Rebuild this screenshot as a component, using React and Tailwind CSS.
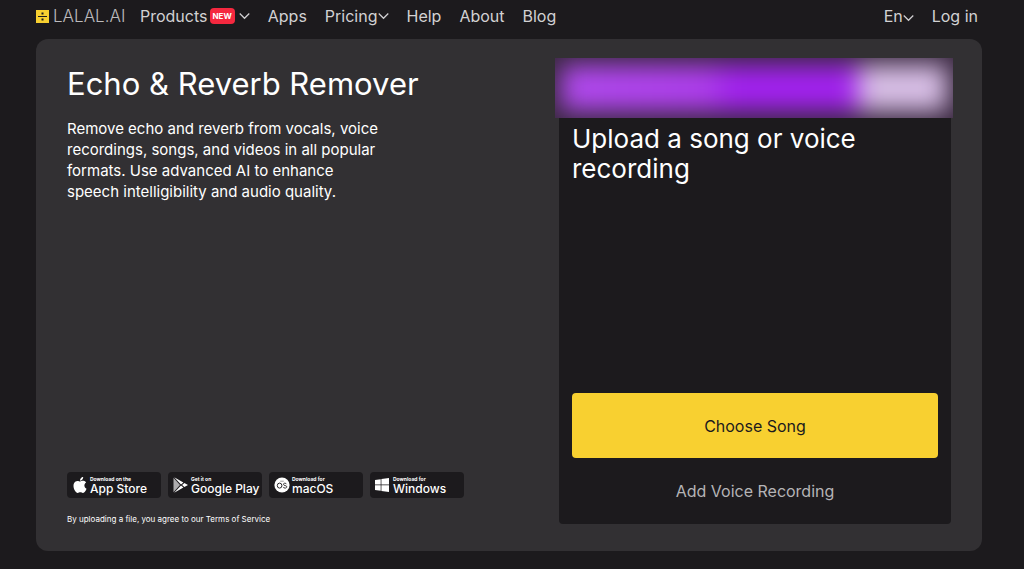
import React from 'react';

const Chevron = ({ className }) => (
  <svg viewBox="0 0 12 8" className={className} fill="none" stroke="currentColor" strokeWidth="1.3" aria-hidden="true">
    <path d="M.8 1.300 6 6.500 11.200 1.300" />
  </svg>
);

const AppleIcon = () => (
  <svg viewBox="0 0 24 24" className="h-4 w-4 shrink-0" fill="#fff" aria-hidden="true">
    <path d="M12.15 6.9c-.95 0-2.41-1.08-3.96-1.04-2.04.03-3.91 1.18-4.96 3.01-2.12 3.68-.55 9.1 1.52 12.09 1.01 1.45 2.21 3.09 3.79 3.04 1.52-.07 2.09-.99 3.93-.99 1.83 0 2.35.99 3.96.95 1.64-.03 2.68-1.48 3.68-2.95 1.16-1.69 1.64-3.32 1.66-3.41-.04-.01-3.18-1.22-3.22-4.86-.03-3.04 2.48-4.49 2.6-4.56-1.43-2.09-3.62-2.32-4.39-2.38-2-.16-3.68 1.09-4.61 1.09zM15.53 3.83c.84-1.01 1.4-2.43 1.25-3.83-1.21.05-2.66.81-3.53 1.82-.78.9-1.46 2.34-1.27 3.71 1.34.1 2.71-.69 3.55-1.7" />
  </svg>
);

const PlayIcon = () => (
  <svg viewBox="0 0 16 16" className="h-4 w-4 shrink-0" aria-hidden="true">
    <path d="M.5.8v14.400L7 8z" fill="#aeadaf" />
    <path d="M1.200.2 10.400 5.400 8 7.600zM1.200 15.800l9.200-5.200L8 8.400z" fill="#fff" />
    <path d="M11.400 5.900 15 8l-3.600 2.100L9.100 8z" fill="#fff" />
  </svg>
);

const MacIcon = () => (
  <svg viewBox="0 0 16 16" className="h-4 w-4 shrink-0" aria-hidden="true">
    <circle cx="8" cy="8" r="7.6" fill="#fff" />
    <path d="M6.200 4.200h3.600" stroke="#8b898c" strokeWidth=".8" />
    <ellipse cx="5.600" cy="8.600" rx="2.300" ry="2.500" fill="none" stroke="#29272a" strokeWidth="1" />
    <path d="M12.500 7.200c-.3-.7-.8-1-1.600-1-.9 0-1.500.4-1.500 1.100 0 1.700 3.400.8 3.400 2.500 0 .9-.8 1.300-1.700 1.300S9.400 10.700 9.200 9.900" fill="none" stroke="#29272a" strokeWidth=".9" />
  </svg>
);

const WindowsIcon = () => (
  <svg viewBox="0 -1 16 16" className="h-4 w-4 shrink-0" fill="#fff" aria-hidden="true">
    <path d="M0 2l5.700-.8v5.400H0zM6.400 1.100 14 0v6.600H6.400zM0 7.300h5.700v5.500L0 12zM6.400 7.300H14V14l-7.600-1.100z" />
  </svg>
);

const stores = [
  { note: 'Download on the', name: 'App Store', icon: AppleIcon },
  { note: 'Get it on', name: 'Google Play', icon: PlayIcon },
  { note: 'Download for', name: 'macOS', icon: MacIcon },
  { note: 'Download for', name: 'Windows', icon: WindowsIcon },
];

const Header = () => (
  <header className="flex h-[39px] items-start justify-between pt-1 text-base leading-6 text-[#d2d1d3]">
    <div className="flex items-center">
      <a href="#home" className="flex items-center gap-1 text-[#bcbbbd]">
        <svg viewBox="0 0 13 13" className="h-[13px] w-[13px]" aria-hidden="true">
          <path d="M0 0h13v13H0z" fill="#f8d030" />
          <path d="M2 6h9v1H2zM5.500 2.500h2v2h-2zM5.500 8.500h2v2h-2z" fill="#1c1a1d" />
        </svg>
        <span className="w-[72px] text-[17px] font-light">LALAL.AI</span>
      </a>
      <nav className="ml-[15px] flex items-center gap-[18px]">
        <button type="button" className="flex items-center">
          Products
          <span className="ml-[2px] rounded bg-[#f5283f] px-[3px] text-[8px] leading-4 font-bold text-white">NEW</span>
          <Chevron className="ml-1 h-2 w-[11px]" />
        </button>
        <a href="#apps">Apps</a>
        <button type="button" className="flex items-center">
          Pricing
          <Chevron className="h-2 w-[11px]" />
        </button>
        <a href="#help">Help</a>
        <a href="#about">About</a>
        <a href="#blog">Blog</a>
      </nav>
    </div>
    <div className="flex items-center gap-[18px] pr-1">
      <button type="button" className="flex items-center">
        En
        <Chevron className="mt-1 h-2 w-[11px]" />
      </button>
      <a href="#login">Log in</a>
    </div>
  </header>
);

const StoreBadge = ({ note, name, icon: Icon }) => (
  <a href="#download" className="flex h-[26px] w-[94px] items-center gap-[2px] rounded bg-[#1c1a1d] pl-[5px] text-white">
    <Icon />
    <span className="flex flex-col whitespace-nowrap">
      <span className="text-[5px] leading-[7px] font-bold">{note}</span>
      <span className="text-xs leading-3 font-medium">{name}</span>
    </span>
  </a>
);

const UploadPanel = () => (
  <div className="flex w-[392px] shrink-0 flex-col rounded bg-[#1c1a1d]">
    {/* Promo banner */}
    <div className="relative -mr-[2px] -ml-1 h-[60px] shrink-0 overflow-hidden bg-[#3a2840]">
      <div className="absolute inset-x-[6px] inset-y-[7px] bg-[linear-gradient(90deg,#b04aec_0%,#ae3eec_38%,#a222ee_44%,#a222ee_76%,#d8bfe6_78%,#d8bfe6_100%)] blur-[12px]" />
    </div>
    <div className="flex flex-1 flex-col px-[13px] pt-[6px] pb-[17px]">
      <h2 className="text-[26px] leading-[30px] text-white">Upload a song or voice recording</h2>
      <button type="button" className="mt-auto h-[65px] rounded bg-[#f8d030] text-base text-[#1c1a1d]">
        Choose Song
      </button>
      <button type="button" className="mt-[17px] h-8 text-base text-[#b5b4b6]">
        Add Voice Recording
      </button>
    </div>
  </div>
);

const App = () => {
  return (
    <div className="flex min-h-screen flex-col bg-[#1c1a1d] pr-[42px] pb-[18px] pl-9 font-['Inter','Liberation_Sans',sans-serif]">
      <Header />

      <main className="flex flex-1 justify-between rounded-xl bg-[#323033] pt-[19px] pr-[31px] pb-[27px] pl-[31px]">
        <section className="flex flex-col text-white">
          <h1 className="mt-[6px] text-[31px] leading-10">Echo &amp; Reverb Remover</h1>
          <p className="mt-[14px] w-[322px] text-[15px] leading-[21px]">
            Remove echo and reverb from vocals, voice recordings, songs, and videos in all popular formats. Use advanced AI to enhance speech intelligibility and audio quality.
          </p>
          <div className="mt-auto flex gap-[7px]">
            {stores.map((store) => (
              <StoreBadge key={store.name} {...store} />
            ))}
          </div>
          <p className="mt-4 text-[8px] leading-[10px]">
            By uploading a file, you agree to our <a href="#terms">Terms of Service</a>
          </p>
        </section>

        <UploadPanel />
      </main>
    </div>
  );
};

export default App;
